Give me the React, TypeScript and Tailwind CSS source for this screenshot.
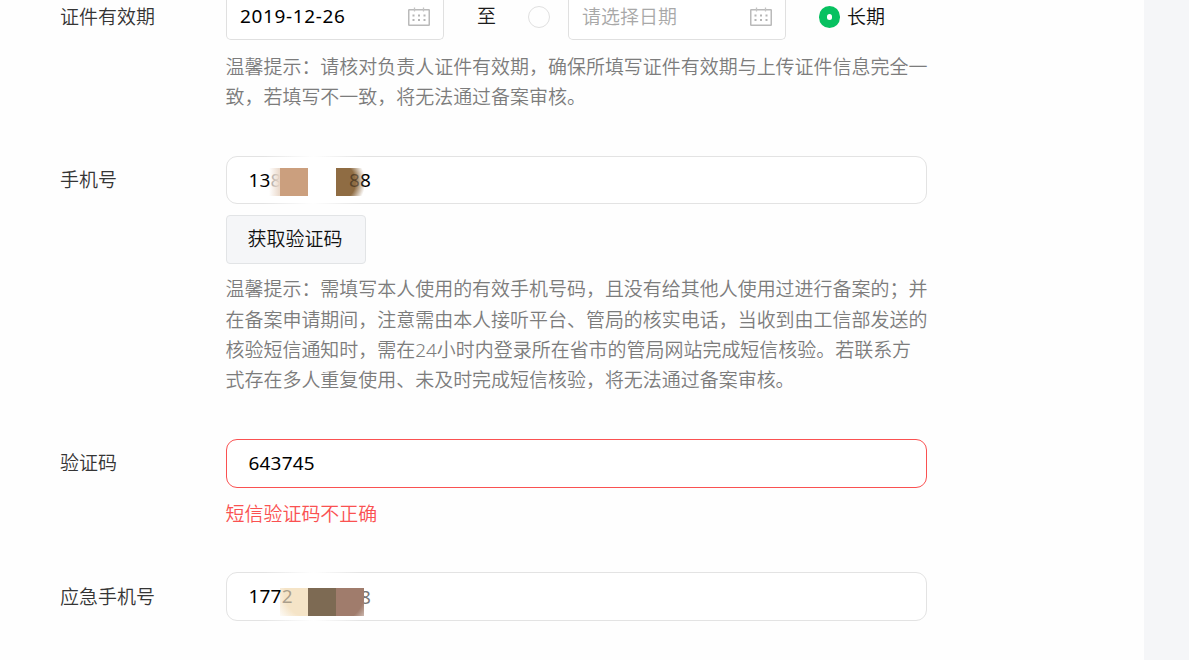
import type { ReactNode } from "react";
import clsx from "clsx";

interface FormRowProps {
  label: string;
  className?: string;
  labelClassName: string;
  children: ReactNode;
}

function FormRow({ label, className, labelClassName, children }: FormRowProps) {
  return (
    <div className={clsx("flex items-start", className)}>
      <div className={clsx("w-[166px] shrink-0 text-[#353535]", labelClassName)}>
        {label}
      </div>
      <div className="w-[702px]">{children}</div>
    </div>
  );
}

function CalendarIcon() {
  return (
    <svg width="24" height="20" viewBox="0 0 24 20" fill="none">
      <rect x="1.75" y="2.75" width="20.5" height="15.5" rx="0.5" stroke="#bababa" strokeWidth="1.5" />
      <path d="M7.5 0.5v4M16.5 0.5v4" stroke="#c4c4c4" strokeWidth="1.3" />
      <path
        d="M5.5 8.5h2M11 8.5h2M16.5 8.5h2M5.5 13h2M11 13h2M16.5 13h2"
        stroke="#b5b5b5"
        strokeWidth="2"
      />
    </svg>
  );
}

function DateField({ value, placeholder }: { value?: string; placeholder?: string }) {
  return (
    <div className="flex h-10 w-[218px] items-center justify-between rounded-b-[5px] border border-t-0 border-[#e0e0e0] bg-white pr-[12px] pb-[6px] pl-[13px]">
      {value ? (
        <span className="-mt-[2px] font-normal tracking-[0.65px] text-black">{value}</span>
      ) : (
        <span className="text-[#a8a8a8]">{placeholder}</span>
      )}
      <CalendarIcon />
    </div>
  );
}

function Radio({ checked }: { checked?: boolean }) {
  return (
    <span
      className={clsx(
        "flex items-center justify-center rounded-full",
        checked ? "h-[22px] w-[21px] bg-[#07c160]" : "h-[22px] w-[22px] border border-[#e0e0e0]",
      )}
    >
      {checked ? <span className="h-[6px] w-[5px] rounded-full bg-white" /> : null}
    </span>
  );
}

function TextField({ error, children }: { error?: boolean; children: ReactNode }) {
  return (
    <div
      className={clsx(
        "relative flex w-[701px] items-center rounded-[11px] border bg-white pl-[21.5px] font-normal tracking-[0.2px] text-black",
        error ? "border-[#fa5151]" : "border-[#e3e3e3]",
      )}
    >
      {children}
    </div>
  );
}

function Hint({ lines }: { lines: string[] }) {
  return (
    <div className="-ml-[0.5px] text-[#7c7c7c]">
      {lines.map((line) => (
        <p key={line} className="h-[30.33px] leading-[30.33px] whitespace-nowrap">
          {line}
        </p>
      ))}
    </div>
  );
}

// Softens the field borders above and below the masked digits
function MaskFade() {
  return (
    <>
      <span className="absolute -top-px left-[36px] h-px w-[100px] bg-linear-to-r from-transparent via-[#fefefe] to-transparent" />
      <span className="absolute -bottom-px left-[36px] h-px w-[100px] bg-linear-to-r from-transparent via-[#fefefe] to-transparent" />
    </>
  );
}

export default function App() {
  return (
    <div className="flex h-[660px] w-[1189px] overflow-hidden bg-[#f5f6f8] font-['Noto_Sans','Noto_Sans_CJK_SC',sans-serif] text-[18.98px] leading-[30px] font-[350]">
      <main className="w-[1144px] bg-[#fefefe] pl-[60px]">
        <FormRow label="证件有效期" labelClassName="mt-[2px]">
          <div className="flex">
            <DateField value="2019-12-26" />
            <span className="mt-px ml-[33px] w-[19px] text-[#1c1c1c]">至</span>
            <div className="mt-[6px] ml-[32px] w-[40px]">
              <Radio />
            </div>
            <DateField placeholder="请选择日期" />
            <div className="mt-px ml-[33px] flex h-8 items-center gap-[7px] whitespace-nowrap text-[#111]">
              <Radio checked />
              长期
            </div>
          </div>
          <div className="mt-[12px]">
            <Hint
              lines={[
                "温馨提示：请核对负责人证件有效期，确保所填写证件有效期与上传证件信息完全一",
                "致，若填写不一致，将无法通过备案审核。",
              ]}
            />
          </div>
        </FormRow>

        <FormRow label="手机号" className="mt-[43.3px]" labelClassName="mt-[9px]">
          <TextField>
            <div className="flex h-[46px] items-center">
              <span>13</span>
              <span className="opacity-35">8</span>
            </div>
            <span className="absolute top-[8px] left-[133px]">8</span>
            <MaskFade />
            <div className="absolute top-[11px] left-[42px] flex h-7">
              <span className="w-[11px] bg-linear-to-r from-transparent to-[#ead8c9]" />
              <span className="w-7 bg-[#cb9f7e]" />
              <span className="w-7" />
              <span className="w-7 overflow-hidden bg-[radial-gradient(circle_at_0_50%,#8f6c43_62%,#8f6c4300_94%)] pl-[13px] leading-[25px] text-black/40">
                8
              </span>
            </div>
          </TextField>
          <button
            type="button"
            className="mt-[11px] block h-[49px] w-[140px] rounded-[4px] border border-[#e2e4e6] bg-[#f5f6f8] pr-[2px] text-[#111]"
          >
            获取验证码
          </button>
          <div className="mt-[10.3px]">
            <Hint
              lines={[
                "温馨提示：需填写本人使用的有效手机号码，且没有给其他人使用过进行备案的；并",
                "在备案申请期间，注意需由本人接听平台、管局的核实电话，当收到由工信部发送的",
                "核验短信通知时，需在24小时内登录所在省市的管局网站完成短信核验。若联系方",
                "式存在多人重复使用、未及时完成短信核验，将无法通过备案审核。",
              ]}
            />
          </div>
        </FormRow>

        <FormRow label="验证码" className="mt-[43.4px]" labelClassName="mt-[9px]">
          <TextField error>
            <span className="h-[47px] leading-[46px]">643745</span>
          </TextField>
          <p className="mt-[11px] -ml-[0.5px] text-[#fa5151]">短信验证码不正确</p>
        </FormRow>

        <FormRow label="应急手机号" className="mt-[43px]" labelClassName="mt-[10px]">
          <TextField>
            <div className="relative z-10 flex h-[47px] items-center">
              <span>177</span>
              <span className="opacity-30">2</span>
            </div>
            <span className="absolute top-[9px] left-[133px] text-[#777]">8</span>
            <MaskFade />
            <div className="absolute top-[15px] left-[53px] flex h-7">
              <span className="w-7 bg-[radial-gradient(circle_at_100%_20%,#f5e4c7_65%,#f5e4c700_105%)]" />
              <span className="w-7 bg-[#7d6a53]" />
              <span className="w-7 bg-[radial-gradient(circle_at_0_20%,#a07c6c_78%,#a07c6c55_110%)]" />
            </div>
          </TextField>
        </FormRow>
      </main>
    </div>
  );
}
